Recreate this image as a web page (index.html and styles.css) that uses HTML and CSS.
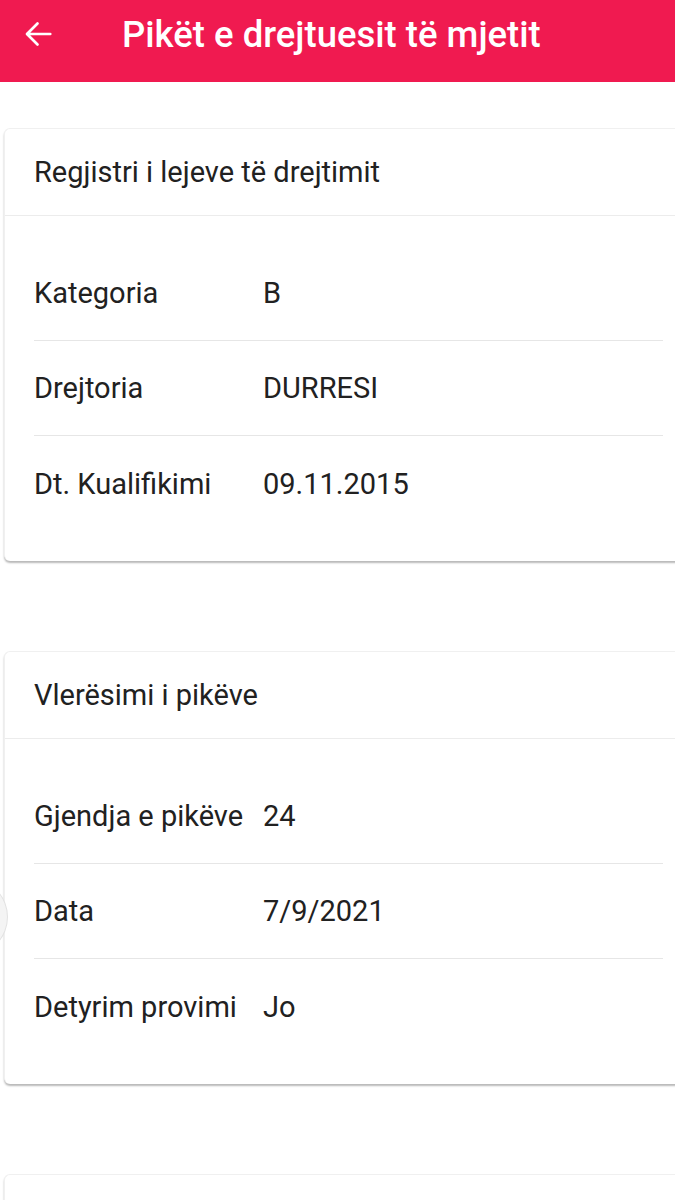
FILE: index.html
```html
<!doctype html>
<html lang="sq">
<head>
	<meta charset="UTF-8">
	<title>Pikët e drejtuesit të mjetit</title>

	<link rel="stylesheet" href="styles.css">

</head>
<body>

	<div class="toolbar">
		<svg class="backIcon" width="36" height="36" viewBox="0 0 24 24">
			<path d="M19.5 12H4.5M11 5l-7 7 7 7" fill="none" stroke="#fff" stroke-width="1.8" stroke-linecap="round" stroke-linejoin="round"/>
		</svg>
		<span class="toolbarTitle">Pikët e drejtuesit të mjetit</span>
	</div>

	<div class="content">

		<div class="card">
			<div class="cardTitle">Regjistri i lejeve të drejtimit</div>
			<div class="cardBody">
				<div class="row">
					<span class="label">Kategoria</span>
					<span class="value">B</span>
				</div>
				<div class="row">
					<span class="label">Drejtoria</span>
					<span class="value">DURRESI</span>
				</div>
				<div class="row">
					<span class="label">Dt. Kualifikimi</span>
					<span class="value">09.11.2015</span>
				</div>
			</div>
		</div>

		<div class="card">
			<div class="cardTitle">Vlerësimi i pikëve</div>
			<div class="cardBody">
				<div class="row">
					<span class="label">Gjendja e pikëve</span>
					<span class="value">24</span>
				</div>
				<div class="row">
					<span class="label">Data</span>
					<span class="value">7/9/2021</span>
				</div>
				<div class="row">
					<span class="label">Detyrim provimi</span>
					<span class="value">Jo</span>
				</div>
			</div>
		</div>

		<div class="card lastCard"></div>

	</div>

	<div class="sideHandle"></div>

</body>
</html>
```

FILE: styles.css
```css
html, body {
	margin: 0px;
	padding: 0px;
}
body {
	font-family: Roboto, "Noto Sans", sans-serif;
	background-color: #ffffff;
	color: #212121;
	overflow: hidden;
	position: relative;
	height: 1200px;
}

.toolbar {
	height: 82px;
	background-color: #f01a50;
	display: flex;
	align-items: center;
	box-sizing: border-box;
}
.backIcon {
	margin-left: 21px;
	margin-top: -14px;
}
.toolbarTitle {
	color: #ffffff;
	font-size: 36.5px;
	font-weight: 500;
	margin-left: 65px;
	margin-top: -14px;
}

.content {
	padding-top: 46px;
}

/* cards run past the right edge of the screen */
.card {
	background-color: #ffffff;
	margin: 0px -18px 90px 4px;
	border-radius: 6px;
	border-top: 1px solid #f0f0f0;
	border-left: 1px solid #f0f0f0;
	box-shadow: 0px 2px 2px rgba(0, 0, 0, 0.28);
}
.lastCard {
	height: 40px;
	margin-bottom: 0px;
}
.cardTitle {
	height: 86px;
	display: flex;
	align-items: center;
	padding-left: 29px;
	font-size: 29px;
	border-bottom: 1px solid #ececec;
}
.cardBody {
	padding: 30px 30px 30px 29px;
}
.row {
	height: 94px;
	display: flex;
	align-items: center;
	font-size: 29px;
	border-bottom: 1px solid #e6e6e6;
}
.row:last-child {
	border-bottom: none;
	height: 95px;
}
.label {
	width: 229px;
	flex-shrink: 0;
}

.sideHandle {
	position: absolute;
	left: -62px;
	top: 880px;
	width: 68px;
	height: 72px;
	border-radius: 50%;
	background-color: #f4f4f4;
	border: 1px solid #e2e2e2;
}
```
